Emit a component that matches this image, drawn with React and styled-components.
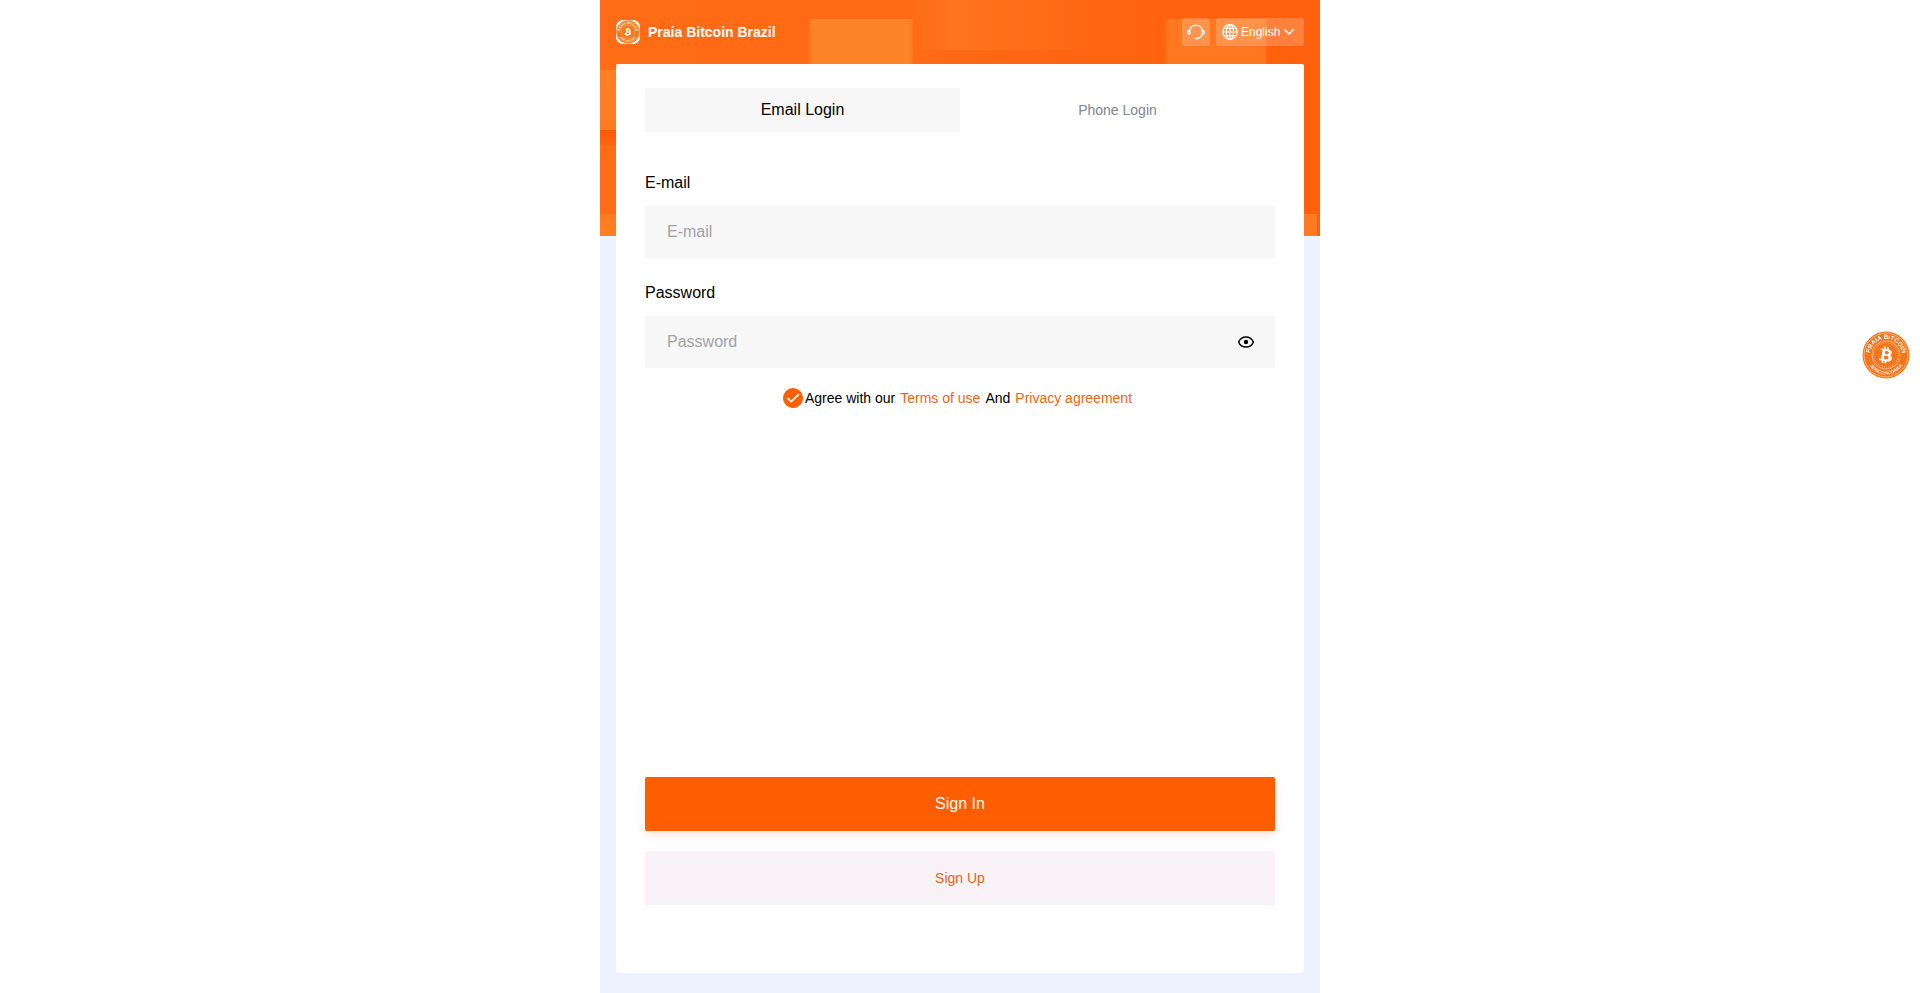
import React, { useState } from "react";
import styled, { createGlobalStyle, css } from "styled-components";
import { FaBtc } from "react-icons/fa";

const GlobalStyle = createGlobalStyle`
  *, *::before, *::after { box-sizing: border-box; }
  body {
    margin: 0;
    background: #fff;
    color: #000;
    font-family: "Liberation Sans", Arial, sans-serif;
    font-size: 14px;
  }
  button, input, select { font: inherit; color: inherit; }
`;

const block = (from, to) => `linear-gradient(${from}, ${to})`;
const softBlock = (color) =>
  `linear-gradient(90deg, transparent, ${color} 4%, ${color} 96%, transparent)`;

const Page = styled.div`
  display: flex;
  flex-direction: column;
  width: 100%;
  max-width: 720px;
  min-height: 100vh;
  margin: 0 auto;
  padding: 0 16px 20px;
  background-color: #edf2ff;
  background-image:
    ${softBlock("#ff8427")},
    ${softBlock("#ff7820")},
    ${block("#ff8022", "#ff7d22")},
    ${block("#fb5806", "#ff6a12")},
    ${block("#ff7a1e", "#ff8022")},
    ${block("#ff7a22", "#ff7a22")},
    linear-gradient(90deg, #ff701a00, #ff741c 20%, #ff701a00),
    linear-gradient(90deg, #ff6c16, #ff6a14 45%, #ff640f 70%, #ff600c);
  background-repeat: no-repeat;
  background-size: 106px 46px, 104px 46px, 16px 60px, 16px 16px, 16px 22px, 13px 22px, 200px 50px, 100% 236px;
  background-position: 208px 19px, 564px 19px, 0 70px, 0 130px, 0 214px, calc(100% - 3px) 214px, 310px 0, 0 0;
`;

const Header = styled.header`
  display: flex;
  align-items: center;
  justify-content: space-between;
  height: 64px;
`;

const Brand = styled.div`
  display: flex;
  align-items: center;
  gap: 8px;
  color: #fff;
  font-weight: 700;
`;

const BrandMark = styled.span`
  display: flex;
  width: 24px;
  height: 24px;
  overflow: hidden;
  border-radius: 7px;
  background: #fff;
`;

const HeaderTools = styled.div`
  display: flex;
  gap: 6px;
  color: #fff;
`;

const toolSurface = css`
  height: 28px;
  border: 0;
  border-radius: 2px;
  background: rgba(255, 255, 255, 0.2);
`;

const SupportButton = styled.button`
  ${toolSurface}
  display: flex;
  align-items: center;
  justify-content: center;
  width: 28px;
  padding: 0;
  cursor: pointer;
`;

const LanguagePicker = styled.label`
  ${toolSurface}
  display: flex;
  align-items: center;
  width: 88px;
  padding: 0 10px 0 6px;
  gap: 3px;
`;

const LanguageSelect = styled.select`
  flex: 1;
  min-width: 0;
  padding: 0;
  border: 0;
  appearance: none;
  background: transparent;
  font-size: 12px;
  outline: none;

  option { color: #000; }
`;

const Card = styled.main`
  display: flex;
  flex: 1;
  flex-direction: column;
  padding: 24px 29px 68px;
  border-radius: 2px;
  background: #fff;
`;

const Tabs = styled.div`
  display: flex;
  margin-bottom: 36px;
`;

const Tab = styled.button`
  flex: 1;
  height: 44px;
  padding: 0;
  border: 0;
  border-radius: 2px;
  background: ${(p) => (p.$active ? "#f7f7f8" : "transparent")};
  color: ${(p) => (p.$active ? "#000" : "#82858c")};
  font-size: ${(p) => (p.$active ? 16 : 14)}px;
  cursor: pointer;
`;

const Form = styled.form`
  display: flex;
  flex: 1;
  flex-direction: column;
`;

const Field = styled.div`
  display: flex;
  flex-direction: column;
  gap: 8px;
  margin-bottom: 20px;
`;

const FieldLabel = styled.label`
  font-size: 16px;
  line-height: 30px;
`;

const InputBox = styled.div`
  display: flex;
  align-items: center;
  height: 52px;
  padding: 0 20px 0 22px;
  border-radius: 2px;
  background: #f7f7f8;
`;

const TextInput = styled.input`
  flex: 1;
  min-width: 0;
  padding: 0;
  border: 0;
  background: transparent;
  font-size: 16px;
  line-height: 24px;
  outline: none;

  &::placeholder { color: #a0a2a6; }
`;

const RevealButton = styled.button`
  display: flex;
  padding: 0;
  border: 0;
  background: transparent;
  cursor: pointer;
`;

const Agreement = styled.div`
  display: flex;
  align-items: center;
  justify-content: center;
  height: 20px;
  line-height: 20px;
`;

const AgreeLabel = styled.label`
  display: flex;
  align-items: center;
  gap: 2px;
`;

const AgreeCheck = styled.input`
  width: 20px;
  height: 20px;
  margin: 0;
  appearance: none;
  border: 1px solid #ff5e00;
  border-radius: 50%;

  &:checked {
    background: #ff5e00 url("data:image/svg+xml,%3Csvg xmlns='http://www.w3.org/2000/svg' viewBox='0 0 20 20' fill='none' stroke='white' stroke-width='1.7' stroke-linecap='round' stroke-linejoin='round'%3E%3Cpath d='M4.6 10.2L8.2 13.7L15.4 6.7'/%3E%3C/svg%3E") center / 20px no-repeat;
  }
`;

const PolicyLink = styled.a`
  margin: 0 5px;
  color: #ee6610;
  text-decoration: none;
`;

const Actions = styled.div`
  display: flex;
  flex-direction: column;
  gap: 20px;
  margin-top: auto;
`;

const ActionButton = styled.button`
  height: 54px;
  border: 0;
  border-radius: 2px;
  cursor: pointer;
  ${(p) =>
    p.$primary
      ? css`
          background: #ff5e00;
          color: #fff;
          font-size: 16px;
          box-shadow: 0 4px 10px rgba(255, 94, 0, 0.16);
        `
      : css`
          background: #f9f3f7;
          color: #ef6212;
          font-size: 14px;
        `}
`;

const FloatingBadge = styled.button`
  position: fixed;
  top: 331px;
  right: 10px;
  display: flex;
  padding: 0;
  border: 0;
  border-radius: 50%;
  background: transparent;
  cursor: pointer;
`;

function Seal({ size, id }) {
  return (
    <svg width={size} height={size} viewBox="0 0 48 48" aria-hidden="true">
      <defs>
        <path id={`${id}-top`} d="M8.4 27a15.9 15.9 0 1 1 31.2 0" />
        <path id={`${id}-bottom`} d="M4.4 24a19.6 19.6 0 0 0 39.2 0" />
      </defs>
      <circle cx="24" cy="24" r="23.5" fill="#f4761a" />
      <circle cx="24" cy="24" r="21.9" fill="none" stroke="#fff" strokeWidth="0.6" opacity="0.7" />
      <circle cx="24" cy="24" r="14" fill="none" stroke="#fff" strokeWidth="0.7" opacity="0.7" />
      <circle cx="24" cy="24" r="12.2" fill="none" stroke="#fff" strokeWidth="0.6" strokeDasharray="1 1" opacity="0.6" />
      <g fill="#fff" fontFamily="Liberation Sans, Arial, sans-serif" fontWeight="700" textAnchor="middle">
        <text fontSize="6.2">
          <textPath href={`#${id}-top`} startOffset="50%">PRAIA BITCOIN</textPath>
        </text>
        <text fontSize="4.8" opacity="0.85">
          <textPath href={`#${id}-bottom`} startOffset="50%">JERICOACOARA</textPath>
        </text>
      </g>
      <g transform="rotate(10 24 24)">
        <FaBtc x="15.5" y="15.5" size={17} color="#fff" />
      </g>
    </svg>
  );
}

function HeadsetIcon() {
  return (
    <svg width="18" height="18" viewBox="0 0 18 18" fill="none" stroke="currentColor" strokeWidth="1.4" strokeLinecap="round" aria-hidden="true">
      <path d="M2.6 7.4A6.6 6.6 0 0 1 15.4 7.4M15.4 11A6.6 6.6 0 0 1 10.4 15.4" />
      <ellipse cx="2" cy="9.4" rx="1.4" ry="1.7" />
      <ellipse cx="16" cy="9.4" rx="1.4" ry="1.7" />
      <path d="M9.2 15.5h.6" strokeWidth="2.2" />
    </svg>
  );
}

function GlobeIcon() {
  return (
    <svg width="16" height="16" viewBox="0 0 16 16" fill="none" stroke="currentColor" strokeWidth="1.2" aria-hidden="true">
      <circle cx="8" cy="8" r="7.3" />
      <ellipse cx="8" cy="8" rx="3.6" ry="7.3" />
      <path d="M8 .7v14.6M.7 8h14.6M2 4.4h12M2 11.6h12" />
    </svg>
  );
}

function ChevronIcon() {
  return (
    <svg width="10" height="6" viewBox="0 0 10 6" fill="none" stroke="currentColor" strokeWidth="1.5" strokeLinecap="round" strokeLinejoin="round" aria-hidden="true">
      <path d="M.8.8L5 5L9.2.8" />
    </svg>
  );
}

function EyeIcon() {
  return (
    <svg width="18" height="14" viewBox="0 0 18 14" aria-hidden="true">
      <path d="M1.6 7C3 3.6 5.9 1.9 9 1.9S15 3.6 16.4 7C15 10.4 12.1 12.1 9 12.1S3 10.4 1.6 7Z" fill="none" stroke="#000" strokeWidth="1.5" />
      <circle cx="9" cy="7" r="2.2" />
    </svg>
  );
}

export default function App() {
  const [tab, setTab] = useState("email");
  const [revealed, setRevealed] = useState(false);

  return (
    <>
      <GlobalStyle />
      <Page>
        <Header>
          <Brand>
            <BrandMark><Seal size={24} id="brand" /></BrandMark>
            <span>Praia Bitcoin Brazil</span>
          </Brand>
          <HeaderTools>
            <SupportButton type="button" aria-label="Support"><HeadsetIcon /></SupportButton>
            <LanguagePicker>
              <GlobeIcon />
              <LanguageSelect aria-label="Language" defaultValue="en">
                <option value="en">English</option>
              </LanguageSelect>
              <ChevronIcon />
            </LanguagePicker>
          </HeaderTools>
        </Header>
        <Card>
          <Tabs role="tablist">
            <Tab type="button" role="tab" aria-selected={tab === "email"} $active={tab === "email"} onClick={() => setTab("email")}>
              Email Login
            </Tab>
            <Tab type="button" role="tab" aria-selected={tab === "phone"} $active={tab === "phone"} onClick={() => setTab("phone")}>
              Phone Login
            </Tab>
          </Tabs>
          <Form onSubmit={(e) => e.preventDefault()}>
            <Field>
              <FieldLabel htmlFor="email">E-mail</FieldLabel>
              <InputBox>
                <TextInput id="email" type="email" placeholder="E-mail" />
              </InputBox>
            </Field>
            <Field>
              <FieldLabel htmlFor="password">Password</FieldLabel>
              <InputBox>
                <TextInput id="password" type={revealed ? "text" : "password"} placeholder="Password" />
                <RevealButton type="button" aria-label="Show password" onClick={() => setRevealed(!revealed)}>
                  <EyeIcon />
                </RevealButton>
              </InputBox>
            </Field>
            <Agreement>
              <AgreeLabel>
                <AgreeCheck type="checkbox" defaultChecked />
                Agree with our
              </AgreeLabel>
              <PolicyLink href="#terms">Terms of use</PolicyLink>
              <span>And</span>
              <PolicyLink href="#privacy">Privacy agreement</PolicyLink>
            </Agreement>
            <Actions>
              <ActionButton type="submit" $primary>Sign In</ActionButton>
              <ActionButton type="button">Sign Up</ActionButton>
            </Actions>
          </Form>
        </Card>
      </Page>
      <FloatingBadge type="button" aria-label="Praia Bitcoin"><Seal size={48} id="badge" /></FloatingBadge>
    </>
  );
}
